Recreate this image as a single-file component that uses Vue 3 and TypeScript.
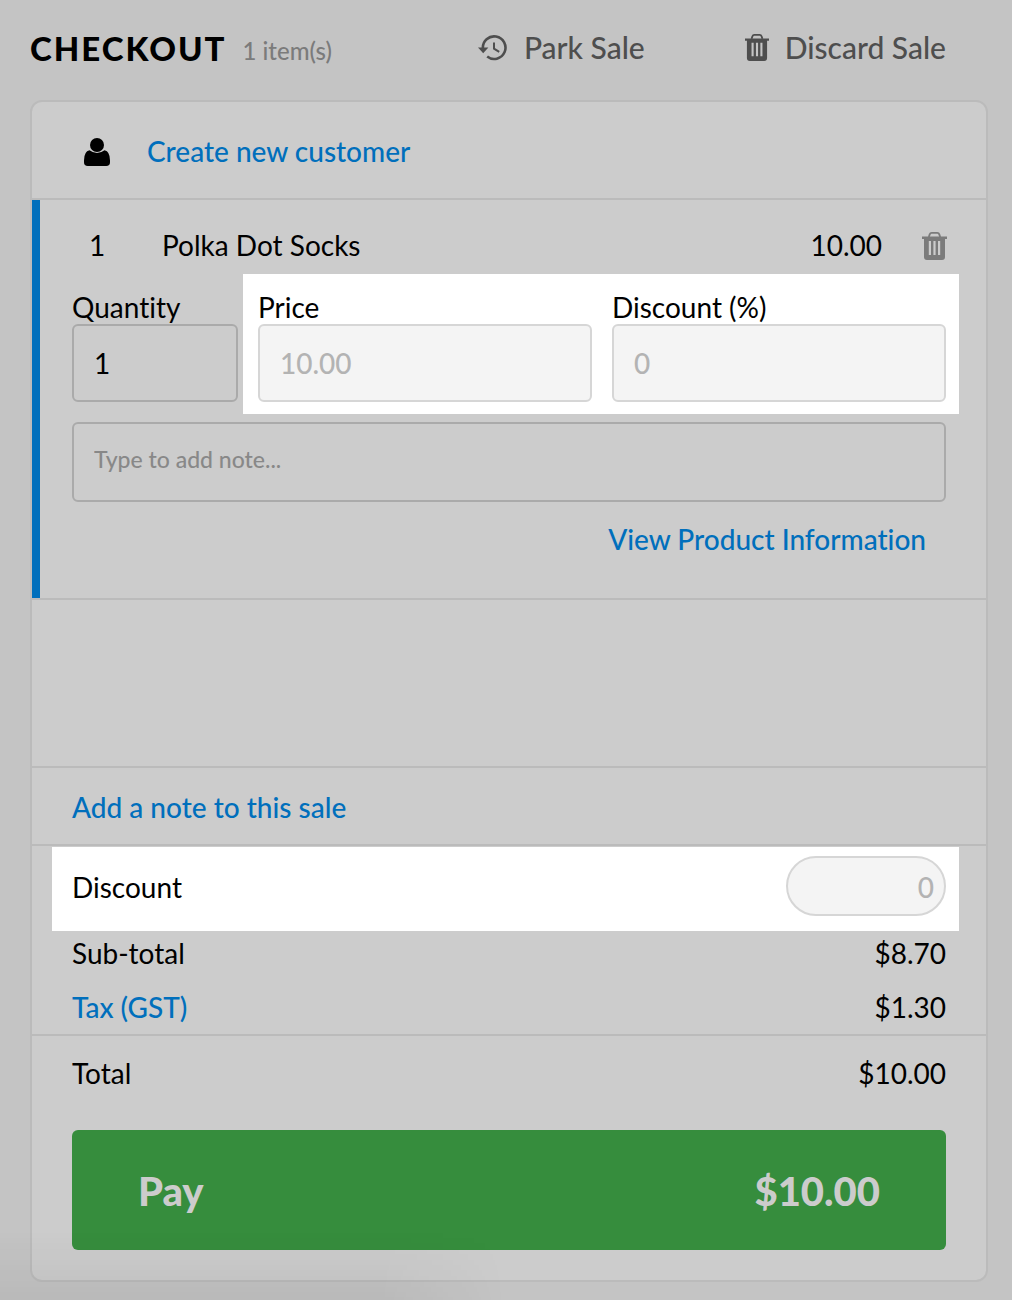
<script setup lang="ts">
import { ref } from 'vue'

const quantity = ref('1')
const price = ref('10.00')
const lineDiscount = ref('0')
const lineNote = ref('')
const saleDiscount = ref('0')
</script>

<template>
  <main class="page">
    <header class="header">
      <h1 class="title">CHECKOUT</h1>
      <span class="count">1 item(s)</span>
      <button type="button" class="action park">
        <svg class="icon-history" viewBox="0 0 30 26" aria-hidden="true">
          <path d="M4.9 13.5A11.3 11.3 0 1 1 9.2 21.6" fill="none" stroke="currentColor" stroke-width="2.6" />
          <path d="M0 12.4h10.4L5.2 18.2z" fill="currentColor" />
          <path d="M16 7.4v6.2l5.2 3.2" fill="none" stroke="currentColor" stroke-width="2" />
        </svg>
        <span>Park Sale</span>
      </button>
      <button type="button" class="action discard">
        <svg class="icon-trash" viewBox="0 0 25 28" aria-hidden="true">
          <path d="M6.8 5l.9-2.6Q8.2.9 9.7.9h5.6q1.5 0 2 1.5L18.2 5" fill="none" stroke="currentColor" stroke-width="1.8" />
          <path fill="currentColor" fill-rule="evenodd" d="M0 4.5h25v2.5h-2v18q0 3-3 3H5q-3 0-3-3V7H0zM6.8 9v14h2.2V9zM11.4 9v14h2.2V9zM16 9v14h2.2V9z" />
        </svg>
        <span>Discard Sale</span>
      </button>
    </header>

    <section class="card">
      <div class="customer">
        <svg class="icon-user" viewBox="0 0 26 28" aria-hidden="true">
          <path d="M5.5 12.3Q0 13.5 0 22.5v1.7Q0 28 3.8 28h18.4q3.8 0 3.8-3.8v-1.7q0-9-5.5-10.2Q17 15 13 15t-7.5-2.7z" />
          <circle cx="13" cy="7" r="7" />
        </svg>
        <a href="#customer">Create new customer</a>
      </div>

      <div class="item">
        <div class="item-head">
          <span class="item-qty">1</span>
          <span class="item-name">Polka Dot Socks</span>
          <span>10.00</span>
          <button type="button" class="remove" aria-label="Remove item">
            <svg class="icon-trash" viewBox="0 0 25 28" aria-hidden="true">
              <path d="M6.8 5l.9-2.6Q8.2.9 9.7.9h5.6q1.5 0 2 1.5L18.2 5" fill="none" stroke="currentColor" stroke-width="1.8" />
              <path fill="currentColor" fill-rule="evenodd" d="M0 4.5h25v2.5h-2v18q0 3-3 3H5q-3 0-3-3V7H0zM6.8 9v14h2.2V9zM11.4 9v14h2.2V9zM16 9v14h2.2V9z" />
            </svg>
          </button>
        </div>
        <div class="fields">
          <div class="field quantity">
            <label for="quantity">Quantity</label>
            <input id="quantity" v-model="quantity" type="text" />
          </div>
          <div class="spotlight pricing">
            <div class="field">
              <label for="price">Price</label>
              <input id="price" v-model="price" type="text" disabled />
            </div>
            <div class="field">
              <label for="line-discount">Discount (%)</label>
              <input id="line-discount" v-model="lineDiscount" type="text" disabled />
            </div>
          </div>
        </div>
        <input v-model="lineNote" class="note" type="text" placeholder="Type to add note..." aria-label="Line note" />
        <a class="info" href="#product">View Product Information</a>
      </div>

      <div class="spare"></div>

      <div class="sale-note"><a href="#note">Add a note to this sale</a></div>

      <div class="totals">
        <div class="spotlight sale-discount">
          <label for="sale-discount">Discount</label>
          <input id="sale-discount" v-model="saleDiscount" type="text" disabled />
        </div>
        <div class="row"><span>Sub-total</span><span>$8.70</span></div>
        <div class="row"><a href="#tax">Tax (GST)</a><span>$1.30</span></div>
      </div>

      <div class="due">
        <div class="row"><span>Total</span><span>$10.00</span></div>
        <button type="button" class="pay"><span>Pay</span><span>$10.00</span></button>
      </div>
    </section>
  </main>
</template>

<style>
body {
  margin: 0;
  background: #c4c4c4;
}
</style>

<style scoped>
* {
  box-sizing: border-box;
}

.page {
  position: relative;
  min-height: 100vh;
  padding: 0 24px 18px 30px;
  overflow: hidden;
  background: #c4c4c4;
  color: #000;
  font-family: Lato, "Open Sans", sans-serif;
  font-size: 28px;
  font-variant-ligatures: no-common-ligatures;
  line-height: 36px;
}

/* soft shade rising from the lower left corner */
.page::after {
  content: "";
  position: absolute;
  left: 0;
  right: 50%;
  bottom: 0;
  height: 70px;
  background: linear-gradient(to top, rgba(0, 0, 0, 0.05), transparent);
  -webkit-mask-image: linear-gradient(to right, #000 75%, transparent);
  mask-image: linear-gradient(to right, #000 75%, transparent);
  pointer-events: none;
}

button {
  padding: 0;
  border: 0;
  background: none;
  font: inherit;
  font-variant-ligatures: inherit;
  cursor: pointer;
}

a {
  color: #006fbc;
  font-weight: 500;
  text-decoration: none;
}

svg {
  display: block;
  flex: none;
}

.header {
  display: flex;
  align-items: center;
  height: 100px;
  padding: 0 42px 5px 0;
}

.title {
  margin: 0;
  font-size: 33px;
  font-weight: 900;
  letter-spacing: 2px;
}

.count {
  margin-left: 16px;
  padding-top: 6px;
  color: #7b7b7b;
  font-size: 24px;
  font-weight: 500;
}

.action {
  display: flex;
  align-items: center;
  gap: 16px;
  color: #4e4e4e;
  font-size: 30px;
  font-weight: 500;
}

.action span {
  padding-bottom: 2px;
}

.park {
  margin-left: auto;
}

.discard {
  margin-left: 100px;
}

.icon-history {
  width: 30px;
  height: 26px;
}

.icon-trash {
  width: 25px;
  height: 28px;
}

.discard .icon-trash {
  width: 24px;
  height: 27px;
}

.card {
  border: 2px solid #bbb;
  border-radius: 12px;
  background: #ccc;
}

.customer {
  display: flex;
  align-items: center;
  gap: 37px;
  height: 98px;
  padding: 4px 40px 0 52px;
  border-bottom: 2px solid #bbb;
}

.customer a {
  padding-bottom: 2px;
}

.icon-user {
  width: 26px;
  height: 28px;
}

.item {
  position: relative;
  display: flex;
  flex-direction: column;
  height: 400px;
  padding: 28px 40px 0;
  border-bottom: 2px solid #bbb;
}

.item::before {
  content: "";
  position: absolute;
  inset: 0 auto 0 0;
  width: 8px;
  background: #006fbc;
}

.item-head {
  display: flex;
  align-items: center;
  height: 36px;
  padding-left: 17px;
}

.item-head span {
  padding-bottom: 2px;
}

.item-qty {
  width: 73px;
}

.item-name {
  flex: 1;
}

.remove {
  margin: 0 -1px 0 40px;
  color: #7b7b7b;
}

.fields {
  display: flex;
  margin: 10px -13px 8px 0;
}

.field {
  display: flex;
  flex: 1;
  flex-direction: column;
  min-width: 0;
}

.field.quantity {
  flex: 0 0 166px;
  margin-right: 5px;
  padding-top: 15px;
}

.field label {
  height: 35px;
}

.spotlight {
  display: flex;
  background: #fff;
}

.pricing {
  flex: 1;
  gap: 20px;
  padding: 15px 13px 12px 15px;
}

input {
  min-width: 0;
  margin: 0;
  border: 2px solid #aaa;
  border-radius: 6px;
  background: transparent;
  color: #000;
  font: inherit;
  outline: 0;
}

.field input {
  width: 100%;
  height: 78px;
  padding: 0 20px;
}

input:disabled {
  border-color: #d6d6d6;
  background: #f4f4f4;
  color: #b3b3b3;
  font-weight: 500;
}

.note {
  width: 100%;
  height: 80px;
  padding: 0 20px 6px;
  font-size: 23px;
  font-weight: 500;
}

.note::placeholder {
  color: #888;
  opacity: 1;
}

.info {
  align-self: flex-end;
  margin: 19px 20px 0 0;
}

.spare {
  height: 168px;
  border-bottom: 2px solid #bbb;
}

.sale-note {
  height: 78px;
  padding: 21px 40px;
  border-bottom: 2px solid #bbb;
}

.totals {
  height: 190px;
  padding: 1px 27px 0 20px;
  border-bottom: 2px solid #bbb;
}

.sale-discount {
  align-items: center;
  justify-content: space-between;
  height: 84px;
  padding: 0 13px 6px 20px;
}

.sale-discount label {
  padding-top: 2px;
}

.sale-discount input {
  width: 160px;
  height: 60px;
  padding: 2px 10px 0;
  border-radius: 30px;
  text-align: right;
}

.row {
  display: flex;
  justify-content: space-between;
}

.totals .row {
  padding: 4px 13px 14px 20px;
}

.due {
  padding: 19px 40px 30px;
}

.pay {
  display: flex;
  align-items: center;
  justify-content: space-between;
  width: 100%;
  height: 120px;
  margin-top: 39px;
  padding: 2px 66px 0;
  border-radius: 6px;
  background: #368d3d;
  color: #ccc;
  font-size: 40px;
  font-weight: 900;
}
</style>
